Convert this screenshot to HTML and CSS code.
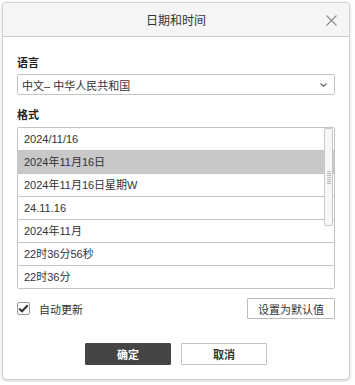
FILE: index.html
```html
<!DOCTYPE html>
<html lang="zh-CN">
<head>
  <meta charset="UTF-8">
  <title>日期和时间</title>
  <meta name="viewport" content="width=device-width, initial-scale=1.0">
  <link rel="stylesheet" href="styles.css">
</head>
<body>
  <div class="dialog">
    <div class="dialog-header">
      <span class="dialog-title">日期和时间</span>
      <svg class="close-btn" width="11" height="11" viewBox="0 0 11 11">
        <path d="M0.5 0.5 L10.5 10.5 M10.5 0.5 L0.5 10.5" stroke="#8a8a8a" stroke-width="1.1" fill="none"/>
      </svg>
    </div>
    <div class="dialog-body">
      <div class="field-label">语言</div>
      <div class="select-box">
        <span>中文– 中华人民共和国</span>
        <svg class="select-arrow" width="7" height="4" viewBox="0 0 7 4">
          <path d="M0.5 0.5 L3.5 3.2 L6.5 0.5" stroke="#666" stroke-width="1.2" fill="none"/>
        </svg>
      </div>

      <div class="field-label format-label">格式</div>
      <div class="format-list">
        <div class="format-item">2024/11/16</div>
        <div class="format-item selected">2024年11月16日</div>
        <div class="format-item">2024年11月16日星期W</div>
        <div class="format-item">24.11.16</div>
        <div class="format-item">2024年11月</div>
        <div class="format-item">22时36分56秒</div>
        <div class="format-item">22时36分</div>
        <!-- scrollbar thumb drawn over the rows -->
        <div class="scroll-thumb">
          <div class="grip"></div>
        </div>
      </div>

      <div class="options-row">
        <label class="check">
          <span class="check-box">
            <svg width="11" height="9" viewBox="0 0 11 9">
              <path d="M1.2 4.6 L4 7.3 L9.8 1.2" stroke="#333" stroke-width="2" fill="none"/>
            </svg>
          </span>
          自动更新
        </label>
        <button class="btn btn-default">设置为默认值</button>
      </div>

      <div class="dialog-footer">
        <button class="btn btn-primary">确定</button>
        <button class="btn btn-cancel">取消</button>
      </div>
    </div>
  </div>
</body>
</html>
```

FILE: styles.css
```css
body {
  margin: 0;
  background: #fff;
  font-family: "Liberation Sans", "Noto Sans CJK SC", sans-serif;
  font-size: 11px;
  color: #333;
}
.dialog {
  margin: 2px;
  width: 348px;
  box-sizing: border-box;
  border: 1px solid #d2d2d2;
  border-radius: 4px;
  background: #fff;
  box-shadow: 0 1px 3px rgba(0, 0, 0, 0.18);
  overflow: hidden;
}
.dialog-header {
  position: relative;
  height: 33px;
  background: #f5f5f5;
  border-bottom: 1px solid #cbcbcb;
  display: flex;
  align-items: center;
  justify-content: center;
}
.dialog-title {
  font-size: 12px;
  color: #333;
}
.close-btn {
  position: absolute;
  right: 12px;
  top: 12px;
}
.dialog-body {
  padding: 18px 14px 14px 14px;
}
.field-label {
  line-height: 16px;
  font-weight: 600;
  color: #222;
  margin-bottom: 3px;
}
.format-label {
  margin-top: 12px;
  margin-bottom: 4px;
}
.select-box {
  height: 21px;
  box-sizing: border-box;
  border: 1px solid #c4c4c4;
  border-radius: 2px;
  display: flex;
  align-items: center;
  justify-content: space-between;
  padding: 0 7px 0 4px;
  color: #333;
}
.format-list {
  position: relative;
  border: 1px solid #c4c4c4;
  border-radius: 2px;
}
.format-item {
  height: 22px;
  line-height: 22px;
  padding-left: 6px;
  border-top: 1px solid #c4c4c4;
  color: #333;
}
.format-item:first-child {
  border-top: none;
}
.format-item.selected {
  background: #c8c8c8;
}
.scroll-thumb {
  position: absolute;
  top: 0;
  right: 1px;
  width: 9px;
  height: 98px;
  box-sizing: border-box;
  border: 1px solid #c8c8c8;
  border-radius: 2px;
  background: #f7f7f7;
  display: flex;
  align-items: center;
  justify-content: center;
}
.grip {
  width: 4px;
  height: 13px;
  background: repeating-linear-gradient(#b8b8b8 0 1px, transparent 1px 2px);
}
.options-row {
  margin-top: 9px;
  height: 21px;
  display: flex;
  align-items: center;
  justify-content: space-between;
}
.check {
  display: flex;
  align-items: center;
  gap: 9px;
  color: #333;
}
.check-box {
  width: 13px;
  height: 13px;
  box-sizing: border-box;
  border: 1px solid #9a9a9a;
  border-radius: 2px;
  display: flex;
  align-items: center;
  justify-content: center;
}
.btn {
  font-family: inherit;
  font-size: 11px;
  box-sizing: border-box;
  border-radius: 1px;
  cursor: pointer;
  padding: 0;
}
.btn-default {
  width: 88px;
  height: 21px;
  background: #fff;
  border: 1px solid #bdbdbd;
  color: #333;
}
.dialog-footer {
  margin-top: 24px;
  display: flex;
  justify-content: center;
  gap: 10px;
}
.btn-primary, .btn-cancel {
  width: 86px;
  height: 22px;
  font-weight: 700;
}
.btn-primary {
  background: #454545;
  border: 1px solid #454545;
  color: #fff;
}
.btn-cancel {
  background: #fff;
  border: 1px solid #c4c4c4;
  color: #333;
}
```
